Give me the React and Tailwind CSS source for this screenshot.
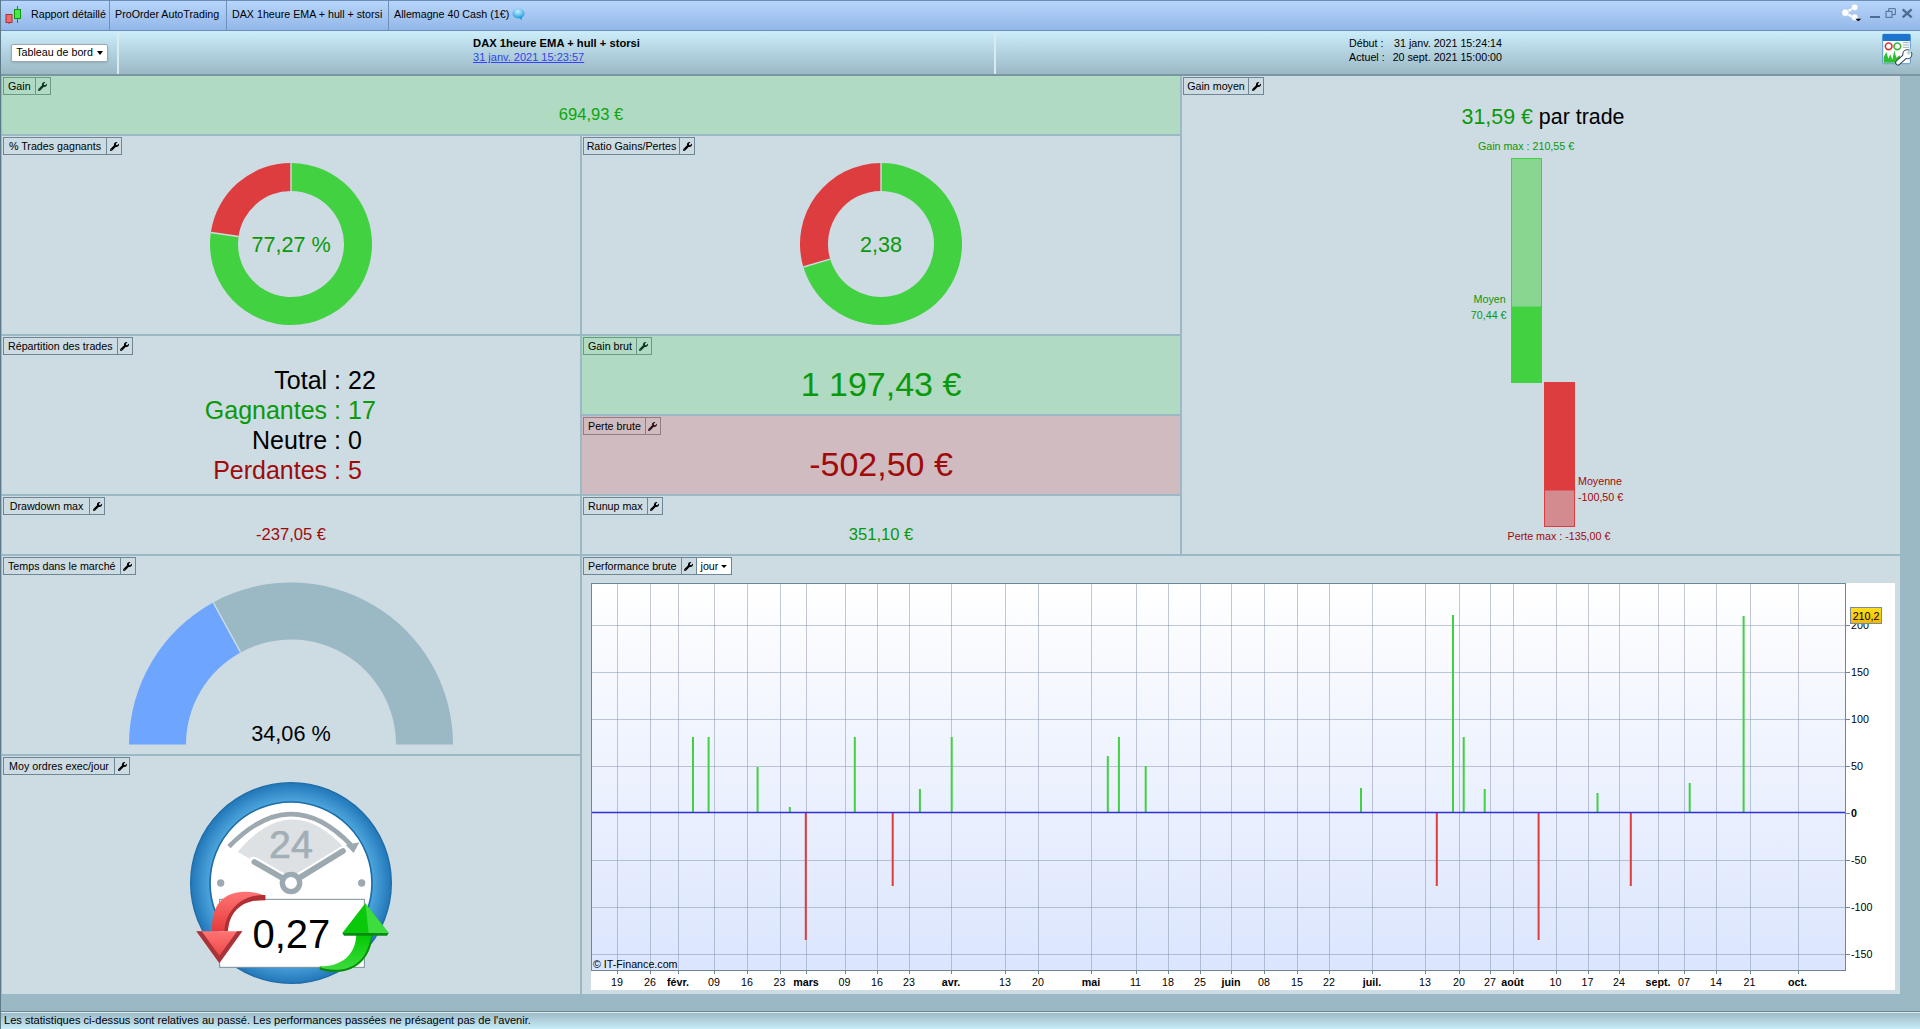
import React from "react";
import { FaWrench } from "react-icons/fa";

const GREEN = "#41d141";
const RED = "#de3d3f";
const TEXT_GREEN = "#0a990a";
const TEXT_RED = "#a00a0a";
const PANEL = "#cddbe2";

// ring sector, angles in degrees clockwise from 12 o'clock
const ringPath = (cx, cy, R, r, a0, a1) => {
  const pt = (rad, a) => {
    const t = ((a - 90) * Math.PI) / 180;
    return `${(cx + rad * Math.cos(t)).toFixed(2)} ${(cy + rad * Math.sin(t)).toFixed(2)}`;
  };
  const large = a1 - a0 > 180 ? 1 : 0;
  return `M${pt(R, a0)} A${R} ${R} 0 ${large} 1 ${pt(R, a1)} L${pt(r, a1)} A${r} ${r} 0 ${large} 0 ${pt(r, a0)} Z`;
};

const tones = {
  blue: "border-[#6f8794]",
  green: "border-[#6a9a85]",
  red: "border-[#917c88]",
};

const Title = ({ label, tone = "blue", w = "", children }) => (
  <div className="h-[20px] pt-px pl-px shrink-0">
    <div className={`flex w-fit h-[18px] items-center border ${tones[tone]} text-[10.7px] leading-none text-black`}>
      <span className={`${w} ${w ? "" : "px-[4px]"} whitespace-nowrap h-full flex items-center justify-center border-r ${tones[tone]}`}>{label}</span>
      <span className="w-[14px] flex justify-center">
        <FaWrench size={9} className={tone === "blue" ? "text-black" : tone === "green" ? "text-[#10351f]" : "text-[#35121a]"} />
      </span>
      {children}
    </div>
  </div>
);

const Donut = ({ pctRed, label }) => (
  <div className="flex justify-center mt-[5px]">
    <svg width="166" height="166" viewBox="0 0 166 166">
      <path d={ringPath(83, 83, 81, 53, 0, 360 - pctRed * 3.6 - 0.01)} fill={GREEN} />
      <path d={ringPath(83, 83, 81, 53, 360 - pctRed * 3.6, 360)} fill={RED} />
      <line x1="83" y1="2" x2="83" y2="30" stroke={PANEL} strokeWidth="1.4" />
      <line
        x1={83 + 53 * Math.sin((-pctRed * 3.6 * Math.PI) / 180)}
        y1={83 - 53 * Math.cos((-pctRed * 3.6 * Math.PI) / 180)}
        x2={83 + 81 * Math.sin((-pctRed * 3.6 * Math.PI) / 180)}
        y2={83 - 81 * Math.cos((-pctRed * 3.6 * Math.PI) / 180)}
        stroke={PANEL}
        strokeWidth="1.4"
      />
      <text x="83" y="91" textAnchor="middle" fontSize="21.6" fill={TEXT_GREEN}>
        {label}
      </text>
    </svg>
  </div>
);

const Gauge = () => {
  const cx = 291;
  const cy = 744.5;
  const a = (34.06 / 100) * 180;
  return (
    <div className="flex justify-center mt-[6px]">
      <svg width="324" height="164" viewBox="129 582 324 164">
        <path d={ringPath(cx, cy, 162, 105, -90, -90 + a)} fill="#6ea5ff" />
        <path d={ringPath(cx, cy, 162, 105, -90 + a, 90)} fill="#9bb8c5" />
        <line
          x1={cx + 105 * Math.sin(((-90 + a) * Math.PI) / 180)}
          y1={cy - 105 * Math.cos(((-90 + a) * Math.PI) / 180)}
          x2={cx + 162 * Math.sin(((-90 + a) * Math.PI) / 180)}
          y2={cy - 162 * Math.cos(((-90 + a) * Math.PI) / 180)}
          stroke={PANEL}
          strokeWidth="1.4"
        />
        <text x={cx} y="740.5" textAnchor="middle" fontSize="21.7" fill="#000">
          34,06 %
        </text>
      </svg>
    </div>
  );
};

// coordinates taken at 3x of the picture
const ClockIcon = () => (
  <svg width="220" height="210" viewBox="62 60 660 630" className="block">
    <defs>
      <radialGradient id="ringBlue" cx="50%" cy="50%" r="50%">
        <stop offset="78%" stopColor="#54ade3" />
        <stop offset="100%" stopColor="#2277b8" />
      </radialGradient>
      <linearGradient id="redArrow" x1="0" y1="0" x2="0" y2="1">
        <stop offset="0%" stopColor="#ff7474" />
        <stop offset="100%" stopColor="#e63b3b" />
      </linearGradient>
      <linearGradient id="greenArrow" x1="0" y1="0" x2="0" y2="1">
        <stop offset="0%" stopColor="#00c800" />
        <stop offset="100%" stopColor="#3fdc3f" />
      </linearGradient>
    </defs>
    <circle cx="392" cy="372" r="301" fill="url(#ringBlue)" stroke="#1e6ca8" strokeWidth="4" />
    <circle cx="392" cy="372" r="243" fill="#fff" stroke="#1e6ca8" strokeWidth="5" />
    <path d="M232 278 Q392 90 553 268 L392 372 Z" fill="#dde1e4" />
    <path d="M206 263 Q392 70 572 258" fill="none" stroke="#9ca9b0" strokeWidth="14" />
    <path d="M597 250 L556 258 L580 282 Z" fill="#9ca9b0" />
    <text x="392" y="297" textAnchor="middle" fontSize="118" fill="#a3afb6" stroke="#a3afb6" strokeWidth="2">
      24
    </text>
    <line x1="280" y1="308" x2="392" y2="372" stroke="#fff" strokeWidth="30" strokeLinecap="round" />
    <line x1="550" y1="275" x2="392" y2="372" stroke="#fff" strokeWidth="30" strokeLinecap="round" />
    <line x1="282" y1="309" x2="392" y2="372" stroke="#9ca9b0" strokeWidth="17" strokeLinecap="round" />
    <line x1="548" y1="276" x2="392" y2="372" stroke="#9ca9b0" strokeWidth="17" strokeLinecap="round" />
    <circle cx="392" cy="372" r="26" fill="#fff" stroke="#9ca9b0" strokeWidth="16" />
    <circle cx="181" cy="372" r="11" fill="#9ca9b0" />
    <circle cx="604" cy="372" r="11" fill="#9ca9b0" />
    <rect x="178" y="421" width="434" height="204" fill="#fff" stroke="#7a8f9a" strokeWidth="3" />
    <text x="393" y="568" textAnchor="middle" fontSize="120" fill="#000">
      0,27
    </text>
    {/* red arrow */}
    <path d="M315 410 C255 388 190 395 165 450 C155 475 155 500 155 517 L203 517 C203 470 235 418 315 424 Z" fill="url(#redArrow)" />
    <path d="M315 408 L315 424 C235 418 205 470 203 517 L192 517 C195 455 245 405 315 408 Z" fill="#b02f34" />
    <path d="M108 517 L246 517 L177 612 Z" fill="url(#redArrow)" />
    <path d="M108 517 L124 517 L177 590 L230 517 L246 517 L177 612 Z" fill="#a8343a" />
    {/* green arrow */}
    <path d="M478 622 C540 624 588 590 588 522 L636 522 C636 590 590 660 478 630 Z" fill="url(#greenArrow)" />
    <path d="M478 624 C520 640 600 640 625 560 L636 522 C636 600 575 660 478 632 Z" fill="#0a8a12" />
    <path d="M546 522 L685 522 L615 433 Z" fill="#0ac80a" />
    <path d="M546 522 L685 522 L680 530 L551 530 Z" fill="#0a8a12" />
    <path d="M615 433 L625 522 L685 522 Z" fill="#3fdc3f" />
  </svg>
);

const BarsChart = () => (
  <svg width="400" height="420" viewBox="1341 129 400 420" className="block mx-auto shrink-0" fontSize="10.7">
    <text x="1526" y="150" textAnchor="middle" fill={TEXT_GREEN}>
      Gain max : 210,55 €
    </text>
    <rect x="1511.5" y="158.5" width="30" height="148.5" fill="#88d690" stroke={GREEN} />
    <rect x="1511" y="307" width="31" height="76" fill={GREEN} />
    <text x="1505.7" y="303" textAnchor="end" fill={TEXT_GREEN}>
      Moyen
    </text>
    <text x="1506.5" y="319" textAnchor="end" fill={TEXT_GREEN}>
      70,44 €
    </text>
    <rect x="1544" y="382" width="31" height="108" fill={RED} />
    <rect x="1544.5" y="490" width="30" height="36.5" fill="#d48b90" stroke={RED} />
    <text x="1578" y="485" fill={TEXT_RED}>
      Moyenne
    </text>
    <text x="1578" y="501" fill={TEXT_RED}>
      -100,50 €
    </text>
    <text x="1559" y="540" textAnchor="middle" fill={TEXT_RED}>
      Perte max : -135,00 €
    </text>
  </svg>
);

const xTicks = [
  [617, "19"], [650, "26"], [678, "févr.", 1], [714, "09"], [747, "16"], [779.5, "23"], [806, "mars", 1],
  [844.5, "09"], [877, "16"], [909, "23"], [951, "avr.", 1], [1005, "13"], [1038, "20"], [1091, "mai", 1],
  [1135.5, "11"], [1168, "18"], [1200, "25"], [1231, "juin", 1], [1264, "08"], [1297, "15"], [1329, "22"],
  [1372, "juil.", 1], [1425, "13"], [1459, "20"], [1490, "27"], [1512.5, "août", 1], [1555.5, "10"],
  [1587.5, "17"], [1619, "24"], [1658, "sept.", 1], [1684, "07"], [1716, "14"], [1749.5, "21"], [1797.5, "oct.", 1],
];
const yTicks = [200, 150, 100, 50, 0, -50, -100, -150];
const wins = [
  [693, 737], [708.6, 737], [757.6, 767], [789.8, 807], [854.8, 737], [919.9, 789], [951.7, 737], [1107.8, 756],
  [1118.9, 737], [1145.7, 766], [1361, 788], [1453, 615], [1463.7, 737], [1484.7, 789], [1597.5, 793],
  [1689.7, 783], [1743.6, 616],
];
const losses = [[805.8, 940], [892.7, 886], [1436.8, 886], [1538.6, 940], [1630.8, 886]];
const zeroY = 812.5;

const PerfChart = () => (
  <svg width="1304" height="407" viewBox="591 583 1304 407" className="block bg-white" fontSize="10.7">
    <defs>
      <linearGradient id="plotBg" x1="0" y1="0" x2="0" y2="1">
        <stop offset="0%" stopColor="#ffffff" />
        <stop offset="100%" stopColor="#dbe5fd" />
      </linearGradient>
      <linearGradient id="goldBg" x1="0" y1="0" x2="0" y2="1">
        <stop offset="0%" stopColor="#ffe020" />
        <stop offset="100%" stopColor="#f2b700" />
      </linearGradient>
    </defs>
    <rect x="591.5" y="583.5" width="1254" height="387" fill="url(#plotBg)" />
    {xTicks.map(([x]) => (
      <g key={x}>
        <line x1={Math.round(x) + 0.5} y1="584" x2={Math.round(x) + 0.5} y2="970" stroke="#7f8fa8" strokeOpacity="0.48" />
        <line x1={Math.round(x) + 0.5} y1="970" x2={Math.round(x) + 0.5} y2="974" stroke="#6f8794" />
      </g>
    ))}
    {yTicks.map((v) => {
      const y = Math.round(zeroY - v * 0.94) + 0.5;
      return (
        <g key={v}>
          {v !== 0 && <line x1="592" y1={y} x2="1845" y2={y} stroke="#7f8fa8" strokeOpacity="0.48" />}
          <line x1="1845" y1={y} x2="1850" y2={y} stroke="#6f8794" />
          <text x="1851" y={y + 3} fontWeight={v === 0 ? "bold" : "normal"}>
            {v}
          </text>
        </g>
      );
    })}
    {wins.map(([x, top]) => (
      <rect key={x} x={x - 1} y={top} width="2" height={zeroY - top} fill={GREEN} />
    ))}
    {losses.map(([x, bottom]) => (
      <rect key={x} x={x - 1} y={zeroY} width="2" height={bottom - zeroY} fill={RED} />
    ))}
    <line x1="592" y1={zeroY} x2="1845" y2={zeroY} stroke="#2f2fe0" strokeWidth="1.5" />
    <rect x="591.5" y="583.5" width="1254" height="387" fill="none" stroke="#6f8794" />
    <text x="593" y="968">© IT-Finance.com</text>
    {xTicks.map(([x, label, bold]) => (
      <text key={x} x={x} y="985.5" textAnchor="middle" fontWeight={bold ? "bold" : "normal"} fill="#000">
        {label}
      </text>
    ))}
    <rect x="1850.5" y="607.5" width="31" height="16" fill="url(#goldBg)" stroke="#7a8a9a" />
    <text x="1866" y="619.5" textAnchor="middle">
      210,2
    </text>
  </svg>
);

const CandleIcon = () => (
  <svg width="18" height="18" viewBox="0 0 18 18" className="ml-[3px] mr-[9px] shrink-0">
    <line x1="5" y1="10" x2="5" y2="19" stroke="#b33" />
    <rect x="2" y="8.5" width="6" height="8" fill="#f06a6a" stroke="#a33" />
    <line x1="13.5" y1="0" x2="13.5" y2="17" stroke="#0a9a0a" />
    <rect x="10.5" y="3.5" width="6" height="9" fill="#48e848" stroke="#0a9a0a" />
  </svg>
);

const BubbleIcon = () => (
  <svg width="13" height="13" viewBox="0 0 13 13" className="ml-[3px]">
    <defs>
      <radialGradient id="bubble" cx="45%" cy="30%" r="70%">
        <stop offset="0%" stopColor="#c9f0ff" />
        <stop offset="100%" stopColor="#1c9be0" />
      </radialGradient>
    </defs>
    <ellipse cx="6.5" cy="5.5" rx="6" ry="5" fill="url(#bubble)" />
    <path d="M7 9 L9.5 12.5 L10 8.5 Z" fill="#1c9be0" />
  </svg>
);

const WindowIcons = () => (
  <svg width="90" height="31" viewBox="0 0 270 93" className="shrink-0">
    <g stroke="#fff" strokeWidth="7">
      <line x1="74" y1="22" x2="46" y2="38" />
      <line x1="46" y1="38" x2="74" y2="55" />
    </g>
    <g fill="#fff" stroke="#8aa4bf" strokeWidth="1">
      <circle cx="74" cy="22" r="10" />
      <circle cx="46" cy="38" r="11" />
      <circle cx="74" cy="52" r="10" />
    </g>
    <path d="M76 56 L94 56 L85 64 Z" fill="#000" />
    <rect x="120" y="48" width="30" height="6" fill="#4d6d91" />
    <rect x="168" y="34" width="18" height="18" fill="none" stroke="#4d6d91" strokeWidth="3" />
    <path d="M176 34 L176 26 L196 26 L196 44 L186 44" fill="none" stroke="#4d6d91" strokeWidth="3" />
    <path d="M218 28 L245 52 M245 28 L218 52" stroke="#4d6d91" strokeWidth="7" />
  </svg>
);

const ConfigIcon = () => (
  <svg width="32" height="34" viewBox="152 98 96 102" className="shrink-0 -mt-[5px]">
    <rect x="157" y="102" width="83" height="88" rx="3" fill="#fff" stroke="#1b6fc4" strokeWidth="2" />
    <rect x="157" y="101" width="83" height="21" rx="3" fill="#1b75cf" />
    <circle cx="175" cy="138" r="10" fill="none" stroke="#d63a3a" strokeWidth="5" />
    <circle cx="201" cy="138" r="10" fill="none" stroke="#3db53d" strokeWidth="5" />
    <path d="M218 127h18M218 134h18M218 141h18" stroke="#9fb0bf" strokeWidth="3" />
    <path d="M160 187 L160 170 L168 155 L174 175 L180 162 L186 178 L192 150 L198 172 L208 165 L214 187 Z" fill="#2fbf2f" />
    {/* wrench */}
    <line x1="203" y1="187" x2="230" y2="163" stroke="#34434f" strokeWidth="17" strokeLinecap="round" />
    <circle cx="231" cy="162" r="15" fill="#34434f" />
    <line x1="203" y1="187" x2="230" y2="163" stroke="#fff" strokeWidth="11" strokeLinecap="round" />
    <circle cx="231" cy="162" r="12" fill="#fff" />
    <line x1="232" y1="161" x2="246" y2="146" stroke="#b3d3df" strokeWidth="9" />
  </svg>
);

const Tab = ({ w, children, last }) => (
  <div className={`${w} h-full flex items-center pb-[2px] text-[10.7px] text-black ${last ? "pl-[5px]" : "pl-[5px] border-r border-[#6f90b8]"}`}>
    {children}
  </div>
);

const BigValue = ({ color, size, children }) => (
  <div className={`flex-1 flex items-center justify-center ${size} ${color}`}>{children}</div>
);

const App = () => {
  return (
    <div className="w-[1920px] h-[1029px] overflow-hidden flex flex-col font-['Liberation_Sans',Arial,sans-serif] bg-[#9bb8c5] border-l border-[#5d7a8a]">
      {/* window tabs */}
      <div className="h-[31px] shrink-0 flex items-center bg-gradient-to-b from-[#b8d5fa] to-[#92b7e9] border-t border-b border-[#6a8db8]">
        <Tab w="w-[109px]">
          <div className="flex items-center -ml-[5px]">
            <CandleIcon />
            Rapport détaillé
          </div>
        </Tab>
        <Tab w="w-[117px]">ProOrder AutoTrading</Tab>
        <Tab w="w-[162px]">DAX 1heure EMA + hull + storsi</Tab>
        <Tab w="w-[140px]" last>
          Allemagne 40 Cash (1€)
          <BubbleIcon />
        </Tab>
        <div className="ml-auto">
          <WindowIcons />
        </div>
      </div>

      {/* report header */}
      <div className="h-[45px] shrink-0 flex bg-gradient-to-b from-[#ccedfa] to-[#9bb8c5] border-b-2 border-[#7a95a3] text-[10.7px] text-black">
        <div className="w-[118px] flex items-center pl-[10px] border-r-2 border-[#dbe9f0]">
          <div className="w-[97px] h-[18px] bg-white border border-[#9aa8b0] rounded-[2px] shadow-sm flex items-center justify-center gap-[4px] text-[10.7px]">
            Tableau de bord
            <span className="w-0 h-0 border-x-[3.5px] border-x-transparent border-t-[4px] border-t-black" />
          </div>
        </div>
        <div className="w-[877px] flex flex-col justify-center items-center pb-[5px] border-r-2 border-[#dbe9f0]">
          <div>
            <div className="font-bold leading-[14px] text-[11.2px]">DAX 1heure EMA + hull + storsi</div>
            <div className="underline text-[#3344ee] leading-[14px] text-[11px]">31 janv. 2021 15:23:57</div>
          </div>
        </div>
        <div className="flex-1 flex items-center justify-between pl-[353px] pr-[7px]">
          <div className="w-[153px] pb-[5px]">
            <div className="flex justify-between leading-[14px]">
              <span>Début :</span>
              <span>31 janv. 2021 15:24:14</span>
            </div>
            <div className="flex justify-between leading-[14px]">
              <span>Actuel :</span>
              <span>20 sept. 2021 15:00:00</span>
            </div>
          </div>
          <ConfigIcon />
        </div>
      </div>

      {/* panels */}
      <div className="grid grid-cols-[578px_598px_718px] grid-rows-[58px_198px_78px_78px_58px_198px_238px] gap-[2px] pl-px shrink-0">
        <div className="col-start-1 col-span-2 row-start-1 bg-[#b0dac2] flex flex-col">
          <Title label="Gain" tone="green" />
          <BigValue color="text-[#0ea50e]" size="text-[16.6px]">
            694,93 €
          </BigValue>
        </div>

        <div className="col-start-3 row-start-1 row-span-5 bg-[#cddbe2] flex flex-col">
          <Title label="Gain moyen" w="w-[65px]" />
          <div className="mt-[9px] h-[24px] text-center text-[21.4px] leading-[24px] pl-[4px]">
            <span className="text-[#0a990a]">31,59 €</span> <span className="text-black">par trade</span>
          </div>
          <BarsChart />
        </div>

        <div className="col-start-1 row-start-2 bg-[#cddbe2]">
          <Title label="% Trades gagnants" w="w-[103px]" />
          <Donut pctRed={22.73} label="77,27 %" />
        </div>
        <div className="col-start-2 row-start-2 bg-[#cddbe2]">
          <Title label="Ratio Gains/Pertes" w="w-[96px]" />
          <Donut pctRed={29.59} label="2,38" />
        </div>

        <div className="col-start-1 row-start-3 row-span-2 bg-[#cddbe2]">
          <Title label="Répartition des trades" />
          <div className="mt-[9px] grid grid-cols-[339px_1fr] gap-x-[7px] text-[25px] leading-[30px]">
            <span className="text-right text-black">Total :</span>
            <span className="text-black">22</span>
            <span className="text-right text-[#0a990a]">Gagnantes :</span>
            <span className="text-[#0a990a]">17</span>
            <span className="text-right text-black">Neutre :</span>
            <span className="text-black">0</span>
            <span className="text-right text-[#a00a0a]">Perdantes :</span>
            <span className="text-[#a00a0a]">5</span>
          </div>
        </div>
        <div className="col-start-2 row-start-3 bg-[#b0dac2] flex flex-col">
          <Title label="Gain brut" tone="green" />
          <BigValue color="text-[#0a990a] pb-[2px]" size="text-[34px]">
            1 197,43 €
          </BigValue>
        </div>
        <div className="col-start-2 row-start-4 bg-[#d0bbc0] flex flex-col">
          <Title label="Perte brute" tone="red" />
          <BigValue color="text-[#a00a0a] pb-[2px]" size="text-[34px]">
            -502,50 €
          </BigValue>
        </div>

        <div className="col-start-1 row-start-5 bg-[#cddbe2] flex flex-col">
          <Title label="Drawdown max" w="w-[86px]" />
          <BigValue color="text-[#a00a0a]" size="text-[16.6px]">
            -237,05 €
          </BigValue>
        </div>
        <div className="col-start-2 row-start-5 bg-[#cddbe2] flex flex-col">
          <Title label="Runup max" />
          <BigValue color="text-[#0a990a]" size="text-[16.6px]">
            351,10 €
          </BigValue>
        </div>

        <div className="col-start-1 row-start-6 bg-[#cddbe2]">
          <Title label="Temps dans le marché" />
          <Gauge />
        </div>

        <div className="col-start-2 col-span-2 row-start-6 row-span-2 bg-[#cddbe2] flex flex-col">
          <Title label="Performance brute">
            <div className="h-full flex items-center gap-[3px] px-[4px] bg-white border-l border-[#6f8794] rounded-r-[2px]">
              jour
              <span className="w-0 h-0 border-x-[3px] border-x-transparent border-t-[3.5px] border-t-black" />
            </div>
          </Title>
          <div className="mt-[7px] ml-[9px]">
            <PerfChart />
          </div>
        </div>

        <div className="col-start-1 row-start-7 bg-[#cddbe2] flex flex-col">
          <Title label="Moy ordres exec/jour" w="w-[111px]" />
          <div className="flex justify-center mt-[3px]">
            <ClockIcon />
          </div>
        </div>
      </div>

      {/* disclaimer */}
      <div className="mt-[17px] flex-1 flex items-center pl-[3px] bg-gradient-to-b from-[#9bb8c5] to-[#c8ecf8] border-t border-[#6d8794] text-[11.1px] text-black shadow-[inset_0_1px_0_#dbe9f0]">
        Les statistiques ci-dessus sont relatives au passé. Les performances passées ne présagent pas de l'avenir.
      </div>
    </div>
  );
};

export default App;
